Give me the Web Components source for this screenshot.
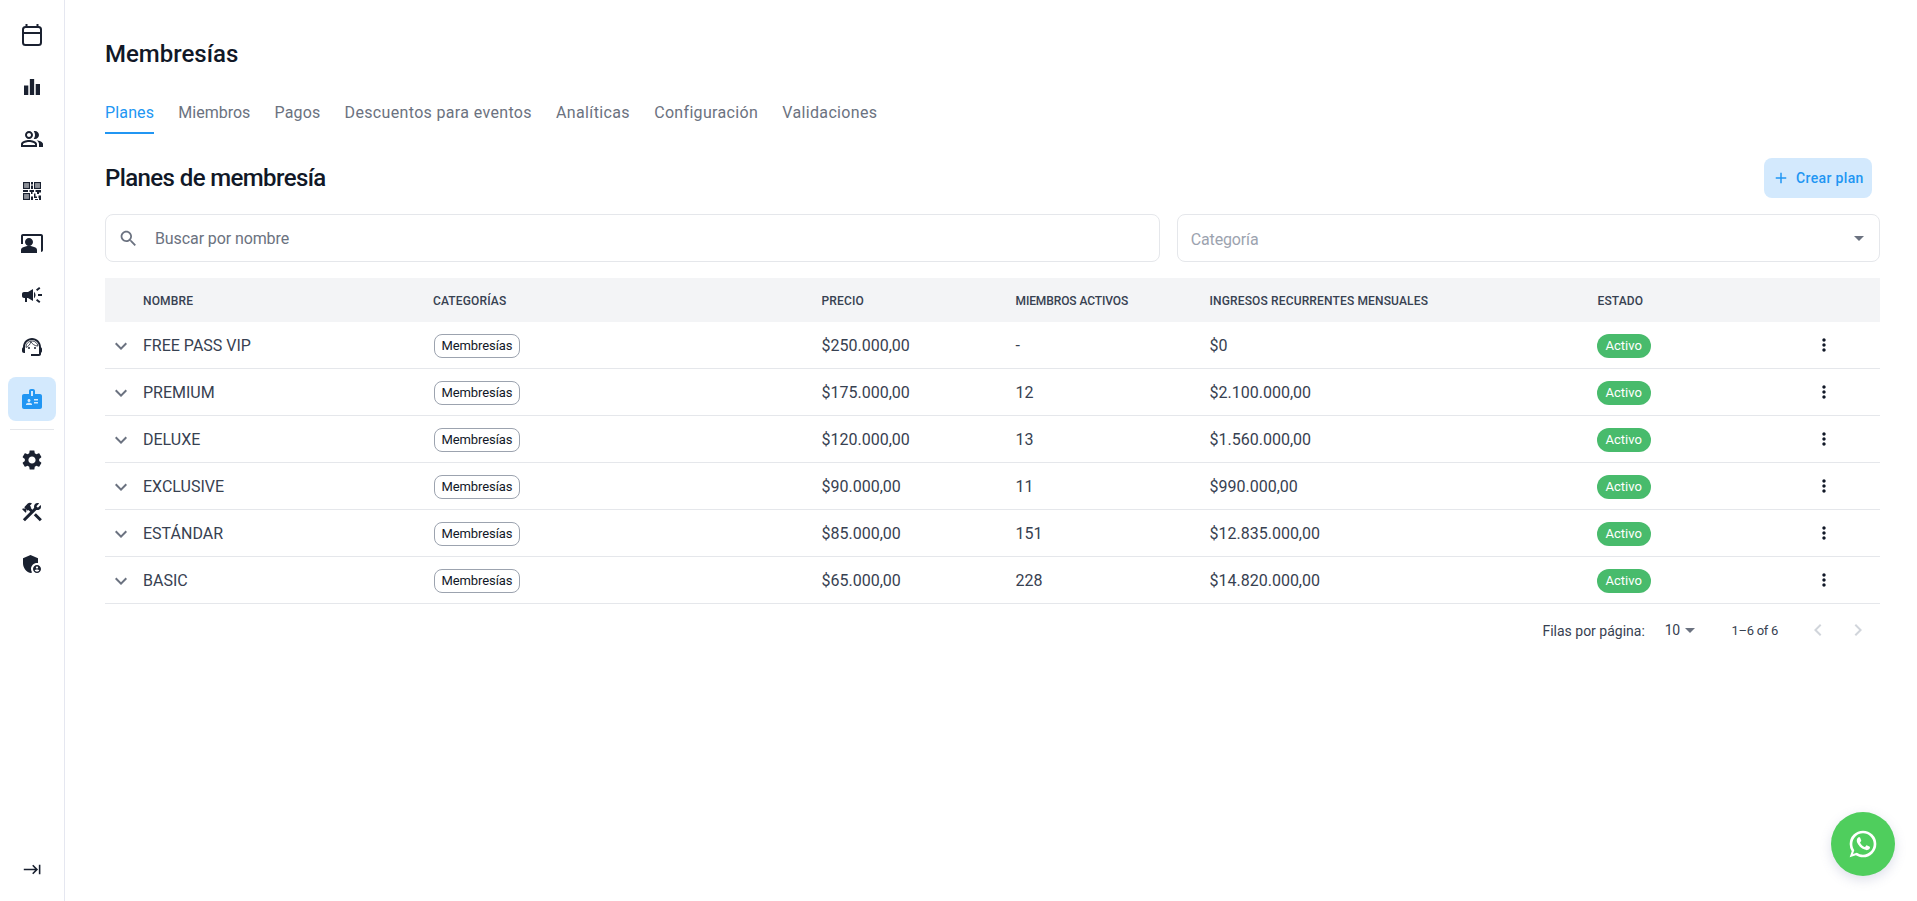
<!DOCTYPE html>
<html lang="es"><head><meta charset="utf-8"><title>Membresías</title>
<style>
html,body{margin:0;height:100%;background:#fff}
body{font-family:Roboto,"Liberation Sans",sans-serif;color:#111827}
</style></head><body>
<x-app>
  <x-sidebar slot="side">
    <x-nav icon="calendar"></x-nav><x-nav icon="bars"></x-nav><x-nav icon="people"></x-nav><x-nav icon="qr"></x-nav>
    <x-nav icon="present"></x-nav><x-nav icon="campaign"></x-nav><x-nav icon="agent"></x-nav><x-nav icon="badge" active></x-nav>
    <x-rule></x-rule>
    <x-nav icon="settings"></x-nav><x-nav icon="tools"></x-nav><x-nav icon="admin"></x-nav>
    <x-nav icon="tab" slot="bottom"></x-nav>
  </x-sidebar>
  <x-title>Membresías</x-title>
  <x-tabs>
    <x-tab active style="letter-spacing:.15px">Planes</x-tab><x-tab style="letter-spacing:0">Miembros</x-tab><x-tab style="letter-spacing:.15px">Pagos</x-tab><x-tab style="letter-spacing:.34px">Descuentos para eventos</x-tab><x-tab style="letter-spacing:.36px">Analíticas</x-tab><x-tab style="letter-spacing:.33px">Configuración</x-tab><x-tab style="letter-spacing:.34px">Validaciones</x-tab>
  </x-tabs>
  <x-section label="Planes de membresía"><x-button>Crear plan</x-button></x-section>
  <x-filters><x-search>Buscar por nombre</x-search><x-select>Categoría</x-select></x-filters>
  <x-table>
    <x-head></x-head>
    <x-row name="FREE PASS VIP" price="$250.000,00" members="-" income="$0"></x-row>
    <x-row name="PREMIUM" price="$175.000,00" members="12" income="$2.100.000,00"></x-row>
    <x-row name="DELUXE" price="$120.000,00" members="13" income="$1.560.000,00"></x-row>
    <x-row name="EXCLUSIVE" price="$90.000,00" members="11" income="$990.000,00"></x-row>
    <x-row name="ESTÁNDAR" price="$85.000,00" members="151" income="$12.835.000,00"></x-row>
    <x-row name="BASIC" price="$65.000,00" members="228" income="$14.820.000,00"></x-row>
  </x-table>
  <x-pager></x-pager>
  <x-fab></x-fab>
</x-app>
<script>
const P={
bars:'<path d="M4 10.5h4.3V20H4zM9.85 4h4.3v16h-4.3zM15.7 9H20v11h-4.3z"/>',
calendar:'<g fill="none" stroke="currentColor" stroke-width="2"><rect x="3" y="4" width="18" height="18" rx="2.5"/><path d="M3 10h18M6.5 1v4M17.5 1v4"/></g>',
people:'<path d="M16.67 13.13C18.04 14.06 19 15.32 19 17v3h4v-3c0-2.18-3.57-3.47-6.33-3.87zM15 12c2.21 0 4-1.79 4-4s-1.79-4-4-4c-.47 0-.91.1-1.33.24C14.5 5.27 15 6.58 15 8s-.5 2.73-1.33 3.76c.42.14.86.24 1.33.24zM9 12c2.21 0 4-1.79 4-4s-1.79-4-4-4-4 1.79-4 4 1.79 4 4 4zm0-6c1.1 0 2 .9 2 2s-.9 2-2 2-2-.9-2-2 .9-2 2-2zM9 13c-2.67 0-8 1.34-8 4v3h16v-3c0-2.66-5.33-4-8-4zm6 5H3v-.99C3.2 16.29 6.3 15 9 15s5.8 1.29 6 2v1z"/>',
qr:'<path d="M3 3h7v7H3zm1.2 1.2v4.6h4.6V4.2zM14 3h7v7h-7zm1.2 1.2v4.6h4.6V4.2zM3 14h7v7H3zm1.2 1.2v4.6h4.6v-4.6zM11 3h2v2.5h-2zM11 6.5h2V10h-2zM3 11h5v2H3zM9.5 11H14v2h-1.5v2H11v-2H9.5zM15.5 11H21v2.5h-2V15h-2v-2h-1.5zM14 14.5h1.5v3H17V19h-3zM18.5 16.5H21V21h-2v-2h-.5zM11 17.5h2V21h-2zM15 20h3v1h-3z"/><path fill-opacity=".5" d="M4.2 4.2h4.6v4.6H4.2zM15.2 4.2h4.6v4.6h-4.6zM4.2 15.2h4.6v4.6H4.2z"/>',
present:'<path d="M21 3H3c-1.1 0-2 .9-2 2v8h2V5h18v16c1.1 0 2-.9 2-2V5c0-1.1-.9-2-2-2zM9 15c2.21 0 4-1.79 4-4s-1.79-4-4-4-4 1.79-4 4 1.79 4 4 4zM15.39 16.56C13.71 15.7 11.53 15 9 15s-4.71.7-6.39 1.56C1.61 17.07 1 18.1 1 19.22V22h16v-2.78c0-1.12-.61-2.15-1.61-2.66z"/>',
campaign:'<path d="M18 11v2h4v-2h-4zm-2 6.61c.96.71 2.21 1.65 3.2 2.39.4-.53.8-1.07 1.2-1.6-.99-.74-2.24-1.68-3.2-2.4-.4.54-.8 1.08-1.2 1.61zM20.4 5.6c-.4-.53-.8-1.07-1.2-1.6-.99.74-2.24 1.68-3.2 2.4.4.53.8 1.07 1.2 1.6.96-.72 2.21-1.65 3.2-2.4zM4 9c-1.1 0-2 .9-2 2v2c0 1.1.9 2 2 2h1v4h2v-4h1l5 3V6L8 9H4zm11.5 3c0-1.33-.58-2.53-1.5-3.35v6.69c.92-.81 1.5-2.01 1.5-3.34z"/>',
agent:'<path d="M21 12.22C21 6.73 16.74 3 12 3c-4.69 0-9 3.65-9 9.28-.6.34-1 .98-1 1.72v2c0 1.1.9 2 2 2h1v-6.1c0-3.87 3.13-7 7-7s7 3.13 7 7V19h-8v2h8c1.1 0 2-.9 2-2v-1.22c.59-.31 1-.92 1-1.62v-2.3c0-.67-.41-1.28-1-1.64z"/><circle cx="9" cy="13" r="1"/><circle cx="15" cy="13" r="1"/><path fill="none" stroke="currentColor" stroke-width=".8" d="M18 11.03C17.52 8.18 15.04 6 12.05 6c-3.03 0-6.29 2.51-6.03 6.45 2.47-1.01 4.33-3.21 4.86-5.89 1.31 2.63 4 4.44 7.12 4.47z"/>',
badge:'<path d="M20 7h-5V4c0-1.1-.9-2-2-2h-2c-1.1 0-2 .9-2 2v3H4c-1.1 0-2 .9-2 2v11c0 1.1.9 2 2 2h16c1.1 0 2-.9 2-2V9c0-1.1-.9-2-2-2zM9 12c.83 0 1.5.67 1.5 1.5S9.83 15 9 15s-1.5-.67-1.5-1.5S8.17 12 9 12zm3 6H6v-.75c0-1 2-1.5 3-1.5s3 .5 3 1.5V18zm1-9h-2V4h2v5zm5 7.5h-4V15h4v1.5zm0-3h-4V12h4v1.5z"/>',
settings:'<path d="M19.14 12.94c.04-.3.06-.61.06-.94 0-.32-.02-.64-.07-.94l2.03-1.58c.18-.14.23-.41.12-.61l-1.92-3.32c-.12-.22-.37-.29-.59-.22l-2.39.96c-.5-.38-1.03-.7-1.62-.94l-.36-2.54c-.04-.24-.24-.41-.48-.41h-3.84c-.24 0-.43.17-.47.41l-.36 2.54c-.59.24-1.13.57-1.62.94l-2.39-.96c-.22-.08-.47 0-.59.22L2.74 8.87c-.12.21-.08.47.12.61l2.03 1.58c-.05.3-.09.63-.09.94s.02.64.07.94l-2.03 1.58c-.18.14-.23.41-.12.61l1.92 3.32c.12.22.37.29.59.22l2.39-.96c.5.38 1.03.7 1.62.94l.36 2.54c.05.24.24.41.48.41h3.84c.24 0 .44-.17.47-.41l.36-2.54c.59-.24 1.13-.56 1.62-.94l2.39.96c.22.08.47 0 .59-.22l1.92-3.32c.12-.22.07-.47-.12-.61l-2.01-1.58zM12 15.6c-1.98 0-3.6-1.62-3.6-3.6s1.62-3.6 3.6-3.6 3.6 1.62 3.6 3.6-1.62 3.6-3.6 3.6z"/>',
tools:'<path d="M13.78 15.3l6 6 2.11-2.16-6-6-2.11 2.16zM17.5 10.1c-.39 0-.81-.05-1.14-.19L4.97 21.25l-2.11-2.11 7.41-7.4-1.77-1.78-.72.7-1.45-1.41v2.86l-.7.7-3.52-3.56.7-.7h2.81L4.22 7.14l3.56-3.56c1.17-1.17 3.05-1.17 4.22 0L9.89 5.74l1.41 1.4-.71.71 1.79 1.78 1.82-1.88C14.06 7.42 14 7 14 6.63c0-1.97 1.56-3.52 3.5-3.52.59 0 1.11.14 1.58.42L16.41 6.2l1.5 1.5 2.67-2.67c.28.47.42.97.42 1.6 0 1.92-1.55 3.47-3.5 3.47z"/>',
admin:'<path d="M17 11c.34 0 .67.04 1 .09V6.27L10.5 3 3 6.27v4.91c0 4.54 3.2 8.79 7.5 9.82.55-.13 1.08-.32 1.6-.55-.69-.98-1.1-2.17-1.1-3.45 0-3.31 2.69-6 6-6z"/><path d="M17 13c-2.21 0-4 1.79-4 4s1.79 4 4 4 4-1.79 4-4-1.79-4-4-4zm0 1.38c.62 0 1.12.51 1.12 1.12s-.51 1.12-1.12 1.12-1.12-.51-1.12-1.12.5-1.12 1.12-1.12zm0 5.37c-.93 0-1.74-.46-2.24-1.17.05-.72 1.51-1.08 2.24-1.08s2.19.36 2.24 1.08c-.5.71-1.31 1.17-2.24 1.17z"/>',
tab:'<path d="M11.59 7.41L15.17 11H1v2h14.17l-3.59 3.59L13 18l6-6-6-6-1.41 1.41zM20 6v12h2V6h-2z"/>',
search:'<path d="M15.5 14h-.79l-.28-.27C15.41 12.59 16 11.11 16 9.5 16 5.91 13.09 3 9.5 3S3 5.91 3 9.5 5.91 16 9.5 16c1.61 0 3.09-.59 4.23-1.57l.27.28v.79l5 4.99L20.49 19l-4.99-5zm-6 0C7.01 14 5 11.99 5 9.5S7.01 5 9.5 5 14 7.01 14 9.5 11.99 14 9.5 14z"/>',
caret:'<path d="M7 10l5 5 5-5z"/>',
plus:'<path d="M19 13h-6v6h-2v-6H5v-2h6V5h2v6h6v2z"/>',
expand:'<path d="M16.59 8.59L12 13.17 7.41 8.59 6 10l6 6 6-6z"/>',
more:'<path d="M12 8c1.1 0 2-.9 2-2s-.9-2-2-2-2 .9-2 2 .9 2 2 2zm0 2c-1.1 0-2 .9-2 2s.9 2 2 2 2-.9 2-2-.9-2-2-2zm0 6c-1.1 0-2 .9-2 2s.9 2 2 2 2-.9 2-2-.9-2-2-2z"/>',
prev:'<path d="M15.41 7.41L14 6l-6 6 6 6 1.41-1.41L10.83 12z"/>',
next:'<path d="M10 6L8.59 7.41 13.17 12l-4.58 4.59L10 18l6-6z"/>',
wa:'<path d="M16.75 13.96c.25.13.41.2.46.3.06.11.04.61-.21 1.18-.2.56-1.24 1.1-1.7 1.12-.46.02-.47.36-2.96-.73-2.49-1.09-3.99-3.75-4.11-3.92-.12-.17-.96-1.38-.92-2.61.05-1.22.69-1.8.95-2.04.24-.26.51-.29.68-.26h.47c.15 0 .36-.06.55.45l.69 1.87c.06.13.1.28.01.44l-.27.41-.39.42c-.12.12-.26.25-.12.5.12.26.62 1.09 1.32 1.78.91.88 1.71 1.17 1.95 1.3.24.14.39.12.54-.04l.81-.94c.19-.25.35-.19.58-.11l1.67.88M12 2a10 10 0 0 1 10 10 10 10 0 0 1-10 10c-1.97 0-3.8-.57-5.35-1.55L2 22l1.55-4.65A9.969 9.969 0 0 1 2 12 10 10 0 0 1 12 2m0 2a8 8 0 0 0-8 8c0 1.72.54 3.31 1.46 4.61L4.5 19.5l2.89-.96A7.95 7.95 0 0 0 12 20a8 8 0 0 0 8-8 8 8 0 0 0-8-8z"/>'
};
function def(tag,html){customElements.define(tag,class extends HTMLElement{
  constructor(){super();this.attachShadow({mode:'open'})}
  connectedCallback(){const a=n=>this.getAttribute(n)||'';this.shadowRoot.innerHTML=typeof html==='function'?html(a,this):html;}
})}
def('x-icon',(a)=>`<style>:host{display:inline-flex;width:${a('size')||24}px;height:${a('size')||24}px;flex:none}svg{width:100%;height:100%;fill:currentColor;display:block}</style><svg viewBox="0 0 24 24" aria-hidden="true">${P[a('name')]||''}</svg>`);
def('x-app',`<style>:host{display:grid;grid-template-columns:65px 1fr;height:901px;overflow:hidden;box-sizing:border-box}
.main{padding:38px 37px 0 40px;min-width:0;display:flex;flex-direction:column}</style>
<slot name="side"></slot><div class="main"><slot></slot></div>`);
def('x-sidebar',`<style>:host{display:flex;flex-direction:column;box-sizing:border-box;border-right:1px solid #e5e7f0;padding:13px 8px 10px;gap:8px;height:901px}
.bottom{margin-top:auto}</style><slot></slot><div class="bottom"><slot name="bottom"></slot></div>`);
def('x-nav',(a)=>`<style>:host{display:flex;align-items:center;justify-content:center;height:44px;width:48px;border-radius:8px;color:#1a2130;flex:none}
:host([active]){background:#d3e9fd;color:#2196f3}</style><x-icon name="${a('icon')}" size="${a('icon')==='tab'?19:24}"></x-icon>`);
def('x-rule',`<style>:host{display:block;height:1px;background:#e5e7eb;margin:0 2px}</style>`);
def('x-title',`<style>:host{display:block;font:500 24px/32px Roboto,sans-serif;color:#111827}</style><slot></slot>`);
def('x-tabs',`<style>:host{display:flex;gap:24.2px;margin-top:20px;height:44px}</style><slot></slot>`);
def('x-tab',`<style>:host{display:flex;align-items:center;box-sizing:border-box;height:44px;padding-top:3px;font:400 16px/20px Roboto,sans-serif;color:#6b7280;letter-spacing:.24px;border-bottom:2px solid transparent}
:host([active]){color:#2196f3;border-bottom-color:#2196f3}</style><slot></slot>`);
def('x-section',(a)=>`<style>:host{display:flex;align-items:center;justify-content:space-between;margin-top:24px;height:40px;padding-right:8px}
h2{margin:0;font:500 24px/32px Roboto,sans-serif;letter-spacing:-.6px;color:#111827}</style><h2>${a('label')}</h2><slot></slot>`);
def('x-button',`<style>:host{display:inline-flex;align-items:center;gap:6px;box-sizing:border-box;height:40px;width:108px;padding-left:8px;border-radius:8px;background:#d3e9fd;color:#2196f3;font:500 14px/20px Roboto,sans-serif;letter-spacing:.35px}</style><x-icon name="plus" size="18"></x-icon><span><slot></slot></span>`);
def('x-filters',`<style>:host{display:grid;grid-template-columns:3fr 2fr;gap:17px;margin-top:16px}</style><slot></slot>`);
def('x-search',`<style>:host{display:flex;align-items:center;box-sizing:border-box;height:48px;border:1px solid #e5e7eb;border-radius:8px;padding-left:11.5px;gap:16.5px;color:#6b7280;font:400 16px/24px Roboto,sans-serif;letter-spacing:-.1px}span{padding-top:2px}</style><x-icon name="search" size="21"></x-icon><span><slot></slot></span>`);
def('x-select',`<style>:host{display:flex;align-items:center;justify-content:space-between;box-sizing:border-box;height:48px;border:1px solid #e5e7eb;border-radius:8px;padding:0 8px 0 13px;color:#9ca3af;font:400 16px/24px Roboto,sans-serif;letter-spacing:-.15px}span{padding-top:4px}x-icon{color:#6b7280}</style><span><slot></slot></span><x-icon name="caret"></x-icon>`);
def('x-table',`<style>:host{display:block;margin-top:16px}</style><slot></slot>`);
const COLS='grid-template-columns:38px 290px 388.5px 194px 194px 388px 216px 1fr;';
def('x-head',`<style>:host{display:grid;${COLS}height:44px;background:#f3f4f6;align-items:center;font:500 12px/16px Roboto,sans-serif;letter-spacing:.15px;color:#374151}span{padding-top:2px}.m{letter-spacing:-.1px}</style>
<span></span><span>NOMBRE</span><span>CATEGORÍAS</span><span>PRECIO</span><span class="m">MIEMBROS ACTIVOS</span><span>INGRESOS RECURRENTES MENSUALES</span><span>ESTADO</span><span></span>`);
def('x-row',(a)=>`<style>:host{display:grid;${COLS}height:47px;box-sizing:border-box;border-bottom:1px solid #e5e7eb;align-items:center;font:400 16px/24px Roboto,sans-serif;color:#374151}
.t{padding-top:2px}.ex{color:#6b7280;display:flex;justify-content:center;width:32px;padding-top:2px}.more{color:#111827;display:flex}x-chip{margin-left:1px}x-status{margin-left:-1px}</style>
<span class="ex"><x-icon name="expand"></x-icon></span><span class="t">${a('name')}</span><span><x-chip>Membresías</x-chip></span><span class="t">${a('price')}</span><span class="t">${a('members')}</span><span class="t">${a('income')}</span><span><x-status>Activo</x-status></span><span class="more"><x-icon name="more" size="20"></x-icon></span>`);
def('x-chip',`<style>:host{display:inline-flex;align-items:center;box-sizing:border-box;height:24px;padding:0 6.5px;border:1px solid #9ca3af;border-radius:8px;font:400 13px/16px Roboto,sans-serif;letter-spacing:-.1px;color:#111827}</style><slot></slot>`);
def('x-status',`<style>:host{display:inline-flex;align-items:center;box-sizing:border-box;height:24px;padding:0 9px;border-radius:12px;background:#48bb6c;font:400 13px/16px Roboto,sans-serif;color:#fff}</style><slot></slot>`);
def('x-pager',`<style>:host{display:flex;align-items:center;height:52px;justify-content:flex-end;font:400 14px/20px Roboto,sans-serif;color:#374151;padding-right:10px}
.f{padding-top:2px}.sel{display:flex;align-items:center;margin-left:20px;margin-right:30px;letter-spacing:-.5px;color:#374151}.sel x-icon{color:#6b7280;margin-left:-2px}
.range{margin-right:28px;font-size:13px;letter-spacing:-.3px;padding-top:2px}.nav{color:#d1d5db;display:flex;gap:16px}</style>
<span class="f">Filas por página:</span><span class="sel">10<x-icon name="caret"></x-icon></span><span class="range">1–6 of 6</span><span class="nav"><x-icon name="prev"></x-icon><x-icon name="next"></x-icon></span>`);
def('x-fab',`<style>:host{position:fixed;left:1831px;top:812px;width:64px;height:64px;border-radius:50%;background:#4fce5d;color:#fff;display:flex;align-items:center;justify-content:center;box-shadow:0 4px 12px rgba(100,110,160,.22)}</style><x-icon name="wa" size="32"></x-icon>`);
</script>
</body></html>
